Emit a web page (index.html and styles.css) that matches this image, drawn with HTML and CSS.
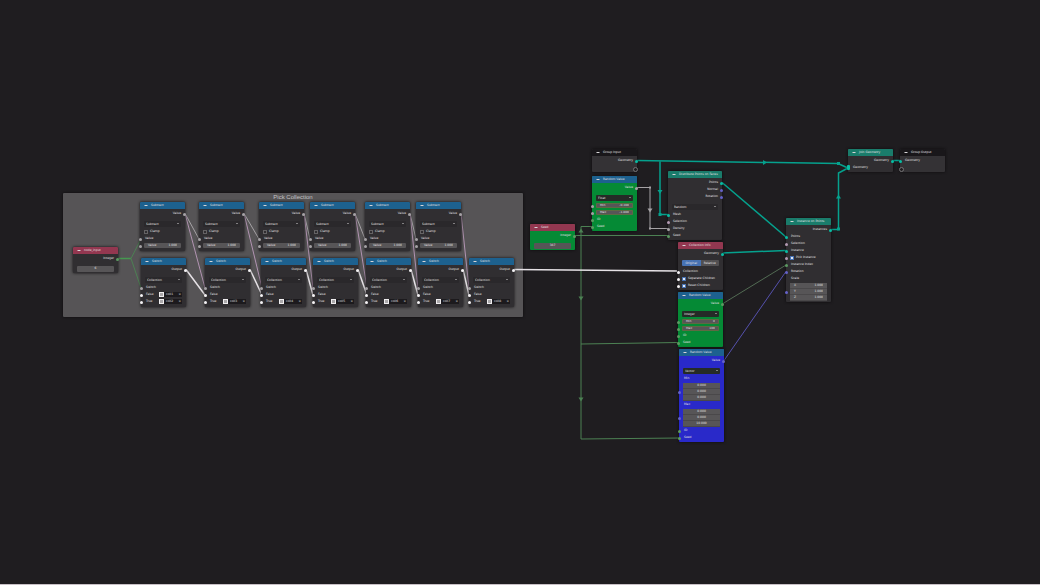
FILE: index.html
```html
<!DOCTYPE html>
<html lang="en">
<head>
<meta charset="utf-8">
<title>Geometry Nodes</title>
<link rel="stylesheet" href="styles.css">
</head>
<body>
<main class="canvas">
  <section class="frame"><h1>Pick Collection</h1></section>

  <svg class="links" width="1040" height="584" viewBox="0 0 1040 584" aria-hidden="true">
    <g class="seed">
      <path class="bold" d="M117 258.500H131"/>
      <path d="M131 258.500L141 239M131 258.500L141 288"/>
      <path d="M574 235.500H668M592 226.500H581V439L679 438M581 344L678 342.500"/>
      <path class="soft" d="M723 303.500L786 265"/>
      <path class="tip" d="M578.500 232.500h5l-2.500-4zM578.500 296.500h5l-2.500 4zM578.500 397.500h5l-2.500 4z"/>
    </g>
    <g class="value">
      <path d="M185 213.500L199 239M244 213.500L259 239M304 213.500L310 239M355 213.500L365 239M410 213.500L416 239"/>
      <path class="mauve" d="M185 213.500L205 288M244 213.500L262 288M304 213.500L313 288M355 213.500L367 288M410 213.500L418 288M461 213.500L469 288"/>
      <path d="M636 187.500H650V228.500H668"/>
      <path class="tip" d="M647.500 208.500h5l-2.500 4zM649 186.500h2v2h-2zM649 227.500h2v2h-2z"/>
    </g>
    <g class="collection">
      <path d="M186 269.500L205 295M250 269.500L262 295M306 269.500L313 295M358 269.500L367 295M411 269.500L418 295M463 269.500L469 295M514 269.500L677 271"/>
    </g>
    <g class="geometry">
      <path d="M637 160.500L838 163.500L848 168M660 161V214.500H668M722 182.500L786 237M722 253L786 250.500M831 229.500H838.500V173L848 168M892 160.500H900"/>
      <path class="tip" d="M763 160v5l4-2.500zM657.500 190h5l-2.500 4zM836 198.500h5l-2.500-4zM837 227.500h3v3h-3zM837 162h3v3h-3zM658.500 213h3v3h-3z"/>
    </g>
    <g class="vector"><path d="M724 360.500L786 271.500"/></g>
  </svg>

  <article class="node input at-count">
    <h2>node_input</h2>
    <div class="row out int">Integer</div>
    <div class="row spaced"><label class="field single"><input aria-label="Integer" value="6"></label></div>
  </article>

  <article class="node math at-math-1">
    <h2>Subtract</h2>
    <div class="row out num">Value</div>
    <div class="pick"><select aria-label="Operation"><option>Subtract</option></select></div>
    <label class="row check"><input type="checkbox">Clamp</label>
    <div class="row in num">Value</div>
    <div class="row in num"><label class="field">Value<input value="1.000"></label></div>
  </article>
  <article class="node math at-math-2">
    <h2>Subtract</h2>
    <div class="row out num">Value</div>
    <div class="pick"><select aria-label="Operation"><option>Subtract</option></select></div>
    <label class="row check"><input type="checkbox">Clamp</label>
    <div class="row in num">Value</div>
    <div class="row in num"><label class="field">Value<input value="1.000"></label></div>
  </article>
  <article class="node math at-math-3">
    <h2>Subtract</h2>
    <div class="row out num">Value</div>
    <div class="pick"><select aria-label="Operation"><option>Subtract</option></select></div>
    <label class="row check"><input type="checkbox">Clamp</label>
    <div class="row in num">Value</div>
    <div class="row in num"><label class="field">Value<input value="1.000"></label></div>
  </article>
  <article class="node math at-math-4">
    <h2>Subtract</h2>
    <div class="row out num">Value</div>
    <div class="pick"><select aria-label="Operation"><option>Subtract</option></select></div>
    <label class="row check"><input type="checkbox">Clamp</label>
    <div class="row in num">Value</div>
    <div class="row in num"><label class="field">Value<input value="1.000"></label></div>
  </article>
  <article class="node math at-math-5">
    <h2>Subtract</h2>
    <div class="row out num">Value</div>
    <div class="pick"><select aria-label="Operation"><option>Subtract</option></select></div>
    <label class="row check"><input type="checkbox">Clamp</label>
    <div class="row in num">Value</div>
    <div class="row in num"><label class="field">Value<input value="1.000"></label></div>
  </article>
  <article class="node math at-math-6">
    <h2>Subtract</h2>
    <div class="row out num">Value</div>
    <div class="pick"><select aria-label="Operation"><option>Subtract</option></select></div>
    <label class="row check"><input type="checkbox">Clamp</label>
    <div class="row in num">Value</div>
    <div class="row in num"><label class="field">Value<input value="1.000"></label></div>
  </article>

  <article class="node math at-switch-1">
    <h2>Switch</h2>
    <div class="row out col">Output</div>
    <div class="pick"><select aria-label="Type"><option>Collection</option></select></div>
    <div class="row in num">Switch</div>
    <div class="row in col">False<button class="asset" type="button"><i></i>coll1<b>×</b></button></div>
    <div class="row in col">True<button class="asset" type="button"><i></i>coll2<b>×</b></button></div>
  </article>
  <article class="node math at-switch-2">
    <h2>Switch</h2>
    <div class="row out col">Output</div>
    <div class="pick"><select aria-label="Type"><option>Collection</option></select></div>
    <div class="row in num">Switch</div>
    <div class="row in col">False</div>
    <div class="row in col">True<button class="asset" type="button"><i></i>coll3<b>×</b></button></div>
  </article>
  <article class="node math at-switch-3">
    <h2>Switch</h2>
    <div class="row out col">Output</div>
    <div class="pick"><select aria-label="Type"><option>Collection</option></select></div>
    <div class="row in num">Switch</div>
    <div class="row in col">False</div>
    <div class="row in col">True<button class="asset" type="button"><i></i>coll4<b>×</b></button></div>
  </article>
  <article class="node math at-switch-4">
    <h2>Switch</h2>
    <div class="row out col">Output</div>
    <div class="pick"><select aria-label="Type"><option>Collection</option></select></div>
    <div class="row in num">Switch</div>
    <div class="row in col">False</div>
    <div class="row in col">True<button class="asset" type="button"><i></i>coll5<b>×</b></button></div>
  </article>
  <article class="node math at-switch-5">
    <h2>Switch</h2>
    <div class="row out col">Output</div>
    <div class="pick"><select aria-label="Type"><option>Collection</option></select></div>
    <div class="row in num">Switch</div>
    <div class="row in col">False</div>
    <div class="row in col">True<button class="asset" type="button"><i></i>coll6<b>×</b></button></div>
  </article>
  <article class="node math at-switch-6">
    <h2>Switch</h2>
    <div class="row out col">Output</div>
    <div class="pick"><select aria-label="Type"><option>Collection</option></select></div>
    <div class="row in num">Switch</div>
    <div class="row in col">False</div>
    <div class="row in col">True<button class="asset" type="button"><i></i>coll7<b>×</b></button></div>
  </article>
  <article class="node math at-switch-7">
    <h2>Switch</h2>
    <div class="row out col">Output</div>
    <div class="pick"><select aria-label="Type"><option>Collection</option></select></div>
    <div class="row in num">Switch</div>
    <div class="row in col">False</div>
    <div class="row in col">True<button class="asset" type="button"><i></i>coll8<b>×</b></button></div>
  </article>

  <article class="node input green at-seed">
    <h2>Seed</h2>
    <div class="row out int">Integer</div>
    <div class="row spaced"><label class="field single"><input aria-label="Seed" value="387"></label></div>
  </article>

  <article class="node group at-group-in">
    <h2>Group Input</h2>
    <div class="row out geo">Geometry</div>
    <div class="row out open"></div>
  </article>

  <article class="node math green at-random-float">
    <h2>Random Value</h2>
    <div class="row out num">Value</div>
    <div class="pick dark"><select aria-label="Data type"><option>Float</option></select></div>
    <div class="row in num"><label class="field ring">Min<input value="-0.300"></label></div>
    <div class="row in num"><label class="field ring">Max<input value="-1.800"></label></div>
    <div class="row in int">ID</div>
    <div class="row in int">Seed</div>
  </article>

  <article class="node geometry wide at-distribute">
    <h2>Distribute Points on Faces</h2>
    <div class="row out geo">Points</div>
    <div class="row out vec">Normal</div>
    <div class="row out vec">Rotation</div>
    <div class="pick"><select aria-label="Distribution method"><option>Random</option></select></div>
    <div class="row in geo">Mesh</div>
    <div class="row in bool">Selection</div>
    <div class="row in num">Density</div>
    <div class="row in int">Seed</div>
  </article>

  <article class="node input at-collection">
    <h2>Collection Info</h2>
    <div class="row out geo">Geometry</div>
    <div class="segments"><button class="on" type="button">Original</button><button type="button">Relative</button></div>
    <div class="row in col">Collection</div>
    <label class="row in col check"><input type="checkbox" checked>Separate Children</label>
    <label class="row in col check"><input type="checkbox" checked>Reset Children</label>
  </article>

  <article class="node math green at-random-int">
    <h2>Random Value</h2>
    <div class="row out int">Value</div>
    <div class="pick dark"><select aria-label="Data type"><option>Integer</option></select></div>
    <div class="row in int"><label class="field ring">Min<input value="0"></label></div>
    <div class="row in int"><label class="field ring">Max<input value="100"></label></div>
    <div class="row in int">ID</div>
    <div class="row in int">Seed</div>
  </article>

  <article class="node math blue at-random-vector">
    <h2>Random Value</h2>
    <div class="row out vec">Value</div>
    <div class="pick dark"><select aria-label="Data type"><option>Vector</option></select></div>
    <div class="row">Min</div>
    <div class="triple in vec single"><input aria-label="Min X" value="0.000"><input aria-label="Min Y" value="0.000"><input aria-label="Min Z" value="0.000"></div>
    <div class="row">Max</div>
    <div class="triple in vec single"><input aria-label="Max X" value="0.000"><input aria-label="Max Y" value="0.000"><input aria-label="Max Z" value="10.000"></div>
    <div class="row in int">ID</div>
    <div class="row in int">Seed</div>
  </article>

  <article class="node geometry at-instance">
    <h2>Instance on Points</h2>
    <div class="row out geo">Instances</div>
    <div class="row in geo">Points</div>
    <div class="row in bool">Selection</div>
    <div class="row in geo">Instance</div>
    <label class="row in bool check"><input type="checkbox" checked>Pick Instance</label>
    <div class="row in int">Instance Index</div>
    <div class="row in vec">Rotation</div>
    <div class="row">Scale</div>
    <div class="triple in vec"><label>X<input value="1.000"></label><label>Y<input value="1.000"></label><label>Z<input value="1.000"></label></div>
  </article>

  <article class="node geometry at-join">
    <h2>Join Geometry</h2>
    <div class="row out geo">Geometry</div>
    <div class="row in geo many">Geometry</div>
  </article>

  <article class="node group at-group-out">
    <h2>Group Output</h2>
    <div class="row in geo">Geometry</div>
    <div class="row in open"></div>
  </article>
</main>
</body>
</html>
```
FILE: styles.css
```css
* { box-sizing: border-box; }

body {
  margin: 0;
  background: #1f1d20;
  color: #e2e0e2;
  font: 3px/7px "DejaVu Sans", sans-serif;
}

.canvas {
  position: relative;
  min-height: 100vh;
  overflow: hidden;
  border-bottom: 1px solid #c8c0c6;
}

.frame {
  position: absolute;
  left: 63px;
  top: 193px;
  width: 460px;
  height: 124px;
  background: #565456;
  border-radius: 1px;
  box-shadow: 0 0 3px #0c0b0d;
}
.frame h1 {
  margin: 0;
  color: #c4c2c4;
  font: 400 6px/8px "Liberation Sans", sans-serif;
  text-align: center;
}

/* Links */
.links { position: absolute; left: 0; top: 0; fill: none; }
.seed { stroke: #4c8153; color: #4c8153; }
.value { stroke: #a5a2a5; color: #a5a2a5; }
.collection { stroke: #e6e2e6; stroke-width: 1.5; }
.geometry path { stroke: #05a18d; stroke-width: 1.5; color: #05a18d; }
.vector { stroke: #5551ad; }
.links .bold { stroke: #469850; stroke-width: 1.5; }
.links .soft { stroke: #526b53; }
.links .mauve { stroke: #b294b2; }
.links .tip { fill: currentColor; stroke: none; }

/* Nodes */
.node {
  position: absolute;
  width: 45px;
  padding-bottom: 1px;
  background: #302e31;
  border-radius: 1px;
  box-shadow: 0 0 3px #0c0b0d;
}
.math:not(.green, .blue) { padding-bottom: 2px; }
.wide { width: 54px; }
.green { background: #058a35; }
.blue { background: #2929c9; }
.group { background: #343235; }

.node h2 {
  display: flex;
  align-items: center;
  gap: 3px;
  height: 7px;
  margin: 0 0 1px;
  padding-left: 4px;
  border-radius: 1px 1px 0 0;
  font-size: 3px;
  font-weight: 400;
  white-space: nowrap;
}
.node h2::before {
  content: "";
  width: 2px;
  height: 1px;
  border: solid transparent;
  border-width: 1px 1px 0;
  border-top-color: #d8d6d8;
}
.input h2 { background: #933750; }
.math h2 { background: #1d618f; }
.node.geometry h2 { background: #1a7c6b; }
.group h2 { background: #19171a; }

.row {
  position: relative;
  display: flex;
  align-items: center;
  height: 7px;
  padding: 0 4px 0 5px;
  white-space: nowrap;
}
.out { justify-content: flex-end; }
.spaced { margin-top: 3px; }

/* Sockets */
.in::before, .out::after {
  content: "";
  position: absolute;
  top: calc(50% - 1px);
  width: 3px;
  height: 3px;
  border-radius: 50%;
  background: #a5a2a5;
}
.in::before { left: -1px; }
.out::after { right: -1px; }
.int::before, .int::after { background: #5c9a62; }
.geo::before, .geo::after { background: #08bda3; }
.vec::before, .vec::after { background: #6562c9; }
.bool::before { background: #b39ab2; }
.col::before, .col::after { background: #f4f2f4; }
.open::before, .open::after { border: 1px solid #757375; background: #1f1d20; }
.many::before { height: 5px; top: 1px; border-radius: 1px; }

/* Controls */
input, select, button {
  margin: 0;
  padding: 0;
  border: 0;
  border-radius: 0;
  background: none;
  color: inherit;
  font: inherit;
}
.field {
  display: flex;
  flex: 1;
  align-items: center;
  min-width: 0;
  height: 5px;
  margin-left: -1px;
  padding: 0 4px;
  border-radius: 1px;
  background: #575557;
  line-height: 5px;
}
.field input, .triple input {
  flex: 1;
  width: 100%;
  min-width: 0;
  height: 5px;
  text-align: right;
}
.field.single { height: 6px; }
.field.single input, .triple.single input { text-align: center; }
.ring { outline: 1px solid #5e6943; outline-offset: -1px; }

.pick {
  position: relative;
  display: flex;
  align-items: center;
  height: 8px;
  margin: 3px 4px 0;
}
.pick select {
  width: 100%;
  height: 6px;
  padding-left: 2px;
  border-radius: 1px;
  background: #2a282b;
  line-height: 6px;
  appearance: none;
}
.dark select { background: #252b27; }
.pick::after {
  content: "";
  position: absolute;
  right: 2px;
  top: 3px;
  border: solid transparent;
  border-width: 1px 1px 0;
  border-top-color: #d8d6d8;
}

.check { gap: 2px; padding-left: 4px; }
.check input {
  width: 4px;
  height: 4px;
  border: 1px solid #656365;
  appearance: none;
}
.check input:checked {
  border-color: #4772b3;
  background: #dce6f5;
}

.asset {
  display: flex;
  align-items: center;
  gap: 2px;
  width: 23px;
  height: 5px;
  margin-left: auto;
  background: #1c1a1d;
  line-height: 5px;
}
.asset i { width: 5px; height: 5px; border: 1px solid #efedef; background: #aaa8aa; }
.asset b { margin-left: auto; padding-right: 1px; font-weight: 400; }

.segments {
  display: grid;
  grid-template-columns: 1fr 1fr;
  height: 6px;
  margin: 3px 4px 2px;
  border-radius: 1px;
  overflow: hidden;
}
.segments button { background: #525052; line-height: 6px; }
.segments .on { background: #4772b3; }

.triple {
  position: relative;
  display: grid;
  grid-template-columns: minmax(0, 1fr);
  grid-template-rows: repeat(3, 6px);
  height: 19px;
  margin: 0 4px;
  padding-top: 1px;
}
.triple.in::before { left: -5px; }
.triple label, .triple.single input {
  display: flex;
  align-items: center;
  height: 6px;
  padding: 0 4px;
  border-bottom: 1px solid #4a484a;
  background: #575557;
}

/* Graph coordinates */
.at-count { left: 73px; top: 247px; }
.at-math-1 { left: 140px; top: 202px; }
.at-math-2 { left: 199px; top: 202px; }
.at-math-3 { left: 259px; top: 202px; }
.at-math-4 { left: 310px; top: 202px; }
.at-math-5 { left: 365px; top: 202px; }
.at-math-6 { left: 416px; top: 202px; }
.at-switch-1 { left: 141px; top: 258px; }
.at-switch-2 { left: 205px; top: 258px; }
.at-switch-3 { left: 261px; top: 258px; }
.at-switch-4 { left: 313px; top: 258px; }
.at-switch-5 { left: 366px; top: 258px; }
.at-switch-6 { left: 418px; top: 258px; }
.at-switch-7 { left: 469px; top: 258px; }
.at-seed { left: 530px; top: 224px; }
.at-group-in { left: 592px; top: 149px; }
.at-random-float { left: 592px; top: 176px; }
.at-distribute { left: 668px; top: 171px; }
.at-collection { left: 678px; top: 242px; }
.at-random-int { left: 678px; top: 292px; }
.at-random-vector { left: 679px; top: 349px; }
.at-instance { left: 786px; top: 218px; }
.at-join { left: 848px; top: 149px; }
.at-group-out { left: 900px; top: 149px; }
```
